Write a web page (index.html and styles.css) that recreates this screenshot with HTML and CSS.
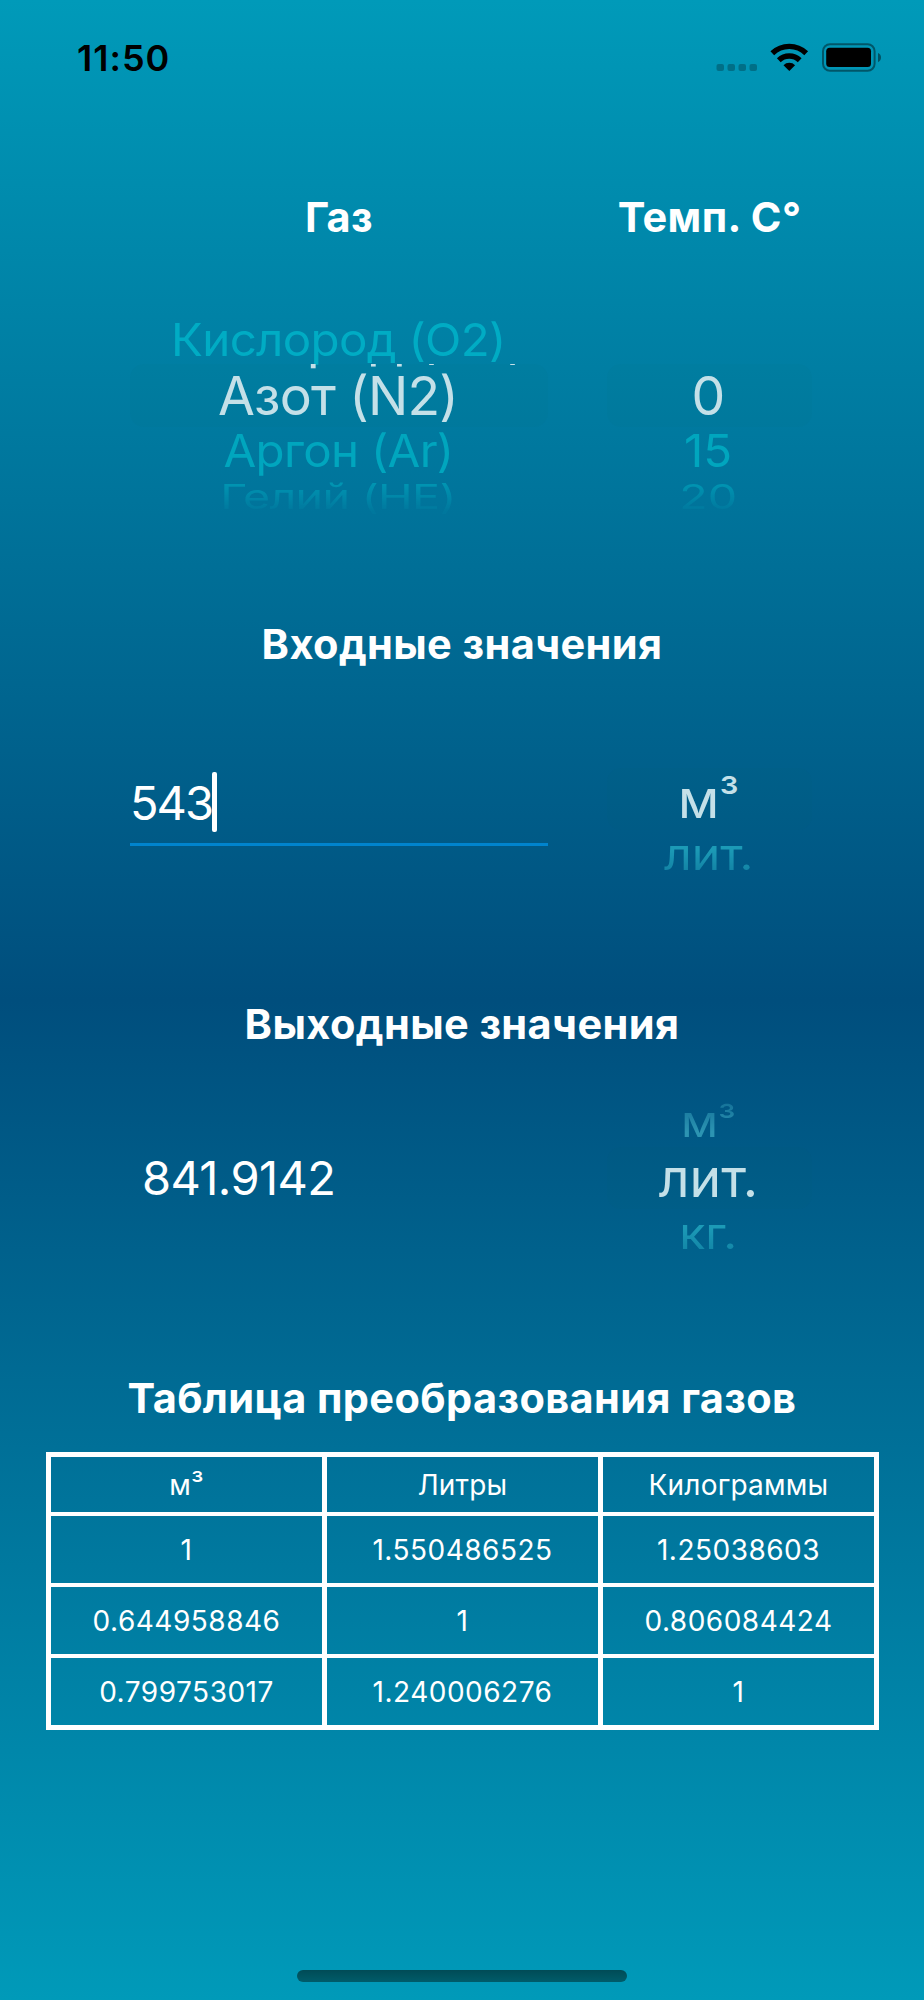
FILE: index.html
```html
<!DOCTYPE html>
<html lang="ru">
<head>
  <meta charset="UTF-8" />
  <title>Конвертер газов</title>
  <meta name="viewport" content="width=device-width, initial-scale=1.0" />
  <link rel="stylesheet" href="styles.css">
</head>
<body>

  <header class="status-bar">
    <span class="time">11:50</span>
    <svg class="status-icons" width="168" height="34" viewBox="714 40 168 34">
      <g fill="#000" fill-opacity="0.25">
        <rect x="716.5" y="64" width="7.5" height="7" rx="2" />
        <rect x="727.5" y="64" width="7.5" height="7" rx="2" />
        <rect x="738.5" y="64" width="7.5" height="7" rx="2" />
        <rect x="749.5" y="64" width="7.5" height="7" rx="2" />
      </g>
      <g fill="none" stroke="#000" stroke-width="5.4">
        <path d="M772.3 53.2 A24.5 24.5 0 0 1 806.2 53.2" />
        <path d="M778.8 60.2 A15 15 0 0 1 799.7 60.2" />
      </g>
      <path d="M789.3 71 L783.5 65.2 A8.2 8.2 0 0 1 795.1 65.2 Z" />
      <rect x="823" y="44.2" width="51.6" height="26.6" rx="7" fill="none" stroke="#000" stroke-opacity="0.42" stroke-width="2" />
      <rect x="826.2" y="47.8" width="44.8" height="19.2" rx="3.5" />
      <path d="M878 53 Q881 54.4 881 57.6 Q881 60.8 878 62.2 Z" fill-opacity="0.45" />
    </svg>
  </header>

  <main class="converter">
    <section class="row labels">
      <h2>Газ</h2>
      <h2>Темп. С°</h2>
    </section>

    <section class="row gas-row">
      <div class="wheel">
        <div class="item above"><span>Кислород (O2)</span></div>
        <div class="item selected">
          <span class="lens">Кислород (O2)</span>
          <span>Азот (N2)</span>
        </div>
        <div class="item below"><span>Аргон (Ar)</span></div>
        <div class="item last"><span>Гелий (HE)</span></div>
      </div>
      <div class="wheel temp">
        <div class="item above"></div>
        <div class="item selected"><span>0</span></div>
        <div class="item below"><span>15</span></div>
        <div class="item last"><span>20</span></div>
      </div>
    </section>

    <h2 class="title">Входные значения</h2>

    <section class="row input-row">
      <div class="field">
        <span class="value">543</span><span class="caret"></span>
      </div>
      <div class="wheel unit">
        <div class="item selected"><span>м<b class="cube">³</b></span></div>
        <div class="item below"><span>лит.</span></div>
      </div>
    </section>

    <h2 class="title">Выходные значения</h2>

    <section class="row output-row">
      <div class="result">841.9142</div>
      <div class="wheel unit">
        <div class="item above"><span>м<b class="cube">³</b></span></div>
        <div class="item selected"><span>лит.</span></div>
        <div class="item below"><span>кг.</span></div>
      </div>
    </section>

    <h2 class="title">Таблица преобразования газов</h2>

    <div class="table">
      <div class="cell head">м³</div>
      <div class="cell head">Литры</div>
      <div class="cell head">Килограммы</div>
      <div class="cell">1</div>
      <div class="cell">1.550486525</div>
      <div class="cell">1.25038603</div>
      <div class="cell">0.644958846</div>
      <div class="cell">1</div>
      <div class="cell">0.806084424</div>
      <div class="cell">0.799753017</div>
      <div class="cell">1.240006276</div>
      <div class="cell">1</div>
    </div>
  </main>

  <div class="home-bar"></div>

</body>
</html>
```

FILE: styles.css
```css
* {
  box-sizing: border-box;
}

body {
  font-family: Inter, "Noto Sans", sans-serif;
  margin: 0;
  width: 924px;
  height: 2000px;
  background: linear-gradient(to bottom, #009ab9, #004e7d 50%, #009ab9);
  color: #fff;
  display: flex;
  flex-direction: column;
  overflow: hidden;
}

/* Status bar */
.status-bar {
  height: 194px;
  padding: 40px 42px 0 77px;
  display: flex;
  justify-content: space-between;
  align-items: flex-start;
  color: #000;
}

.time {
  font-size: 36px;
  font-weight: 600;
  line-height: 36px;
  letter-spacing: 1px;
}

.status-icons {
  display: block;
}

/* Converter */
.converter {
  flex: 1;
}

.row {
  display: grid;
  grid-template-columns: 418px 205px;
  column-gap: 59px;
  padding-left: 130px;
}

h2 {
  margin: 0;
  font-size: 41.5px;
  font-weight: 700;
  line-height: 46px;
  letter-spacing: 0.4px;
  text-align: center;
  white-space: nowrap;
}

.gas-row {
  margin-top: 75px;
  height: 306px;
}

.input-row {
  margin-top: 101px;
  height: 233px;
}

.output-row {
  margin-top: 50px;
  height: 278px;
}

/* Picker wheels */
.item {
  font-size: 53.5px;
  letter-spacing: -0.8px;
  padding-right: 2px;
  display: flex;
  justify-content: center;
  align-items: center;
  white-space: nowrap;
  line-height: 64px;
}

.item span {
  flex: none;
}

.above {
  height: 49px;
  color: #00acc4;
}

.selected {
  height: 63px;
  position: relative;
  overflow: hidden;
  border-radius: 14px;
  background: rgba(0, 110, 110, 0.04);
  color: #c4e0e8;
}

/* neighbour row seen through the magnifier edge */
.lens {
  position: absolute;
  top: -57px;
}

.below {
  height: 47px;
  color: #00a6be;
}

.below span,
.above span {
  transform: scale(0.888, 0.84);
}

.last {
  height: 46px;
  color: #00a0ba;
  -webkit-mask-image: linear-gradient(to bottom, rgba(0, 0, 0, 0.75) 20%, rgba(0, 0, 0, 0.1) 80%);
  mask-image: linear-gradient(to bottom, rgba(0, 0, 0, 0.75) 20%, rgba(0, 0, 0, 0.1) 80%);
}

.last span {
  transform: scale(0.872, 0.64);
}

.unit .item,
.temp .item {
  letter-spacing: 0;
}

.unit .selected {
  height: 62px;
}

.unit .above {
  height: 50px;
  color: #2c94b2;
  -webkit-mask-image: linear-gradient(to bottom, rgba(0, 0, 0, 0.5) 15%, #000 70%);
  mask-image: linear-gradient(to bottom, rgba(0, 0, 0, 0.5) 15%, #000 70%);
}

.unit .below {
  height: 49px;
  color: #1c9ab6;
  -webkit-mask-image: linear-gradient(to bottom, #000 40%, rgba(0, 0, 0, 0.65) 85%);
  mask-image: linear-gradient(to bottom, #000 40%, rgba(0, 0, 0, 0.65) 85%);
}

.unit .above span,
.unit .below span {
  transform: scale(0.9, 0.8);
}

.cube {
  font-size: 44px;
  font-weight: 400;
  line-height: 0;
  vertical-align: 5px;
}

/* Values */
.field {
  height: 78px;
  padding-top: 4px;
  border-bottom: 3px solid #0084ce;
  display: flex;
  align-items: flex-start;
}

.value,
.result {
  font-size: 47px;
  line-height: 62px;
}

.value {
  letter-spacing: -2px;
}

.caret {
  width: 5px;
  height: 60px;
  border-radius: 2px;
  background: #fff;
}

.result {
  padding: 50px 0 0 12px;
  letter-spacing: -0.6px;
}

/* Table */
.table {
  width: 833px;
  margin: 31px 0 0 46px;
  border: 5px solid #fff;
  display: grid;
  grid-template-columns: 276px 276px 271px;
  grid-template-rows: 59px 71px 71px 67px;
}

.cell {
  display: flex;
  justify-content: center;
  align-items: center;
  font-size: 28px;
  letter-spacing: 0.5px;
  border-right: 5px solid #fff;
  border-bottom: 4px solid #fff;
}

.head {
  letter-spacing: 0.2px;
}

.cell:nth-child(3n) {
  border-right: none;
}

.cell:nth-last-child(-n+3) {
  border-bottom: none;
}

.home-bar {
  width: 330px;
  height: 12px;
  margin: 0 auto 18px;
  border-radius: 6px;
  background: linear-gradient(to bottom, #004b56, #005c6a);
}
```
